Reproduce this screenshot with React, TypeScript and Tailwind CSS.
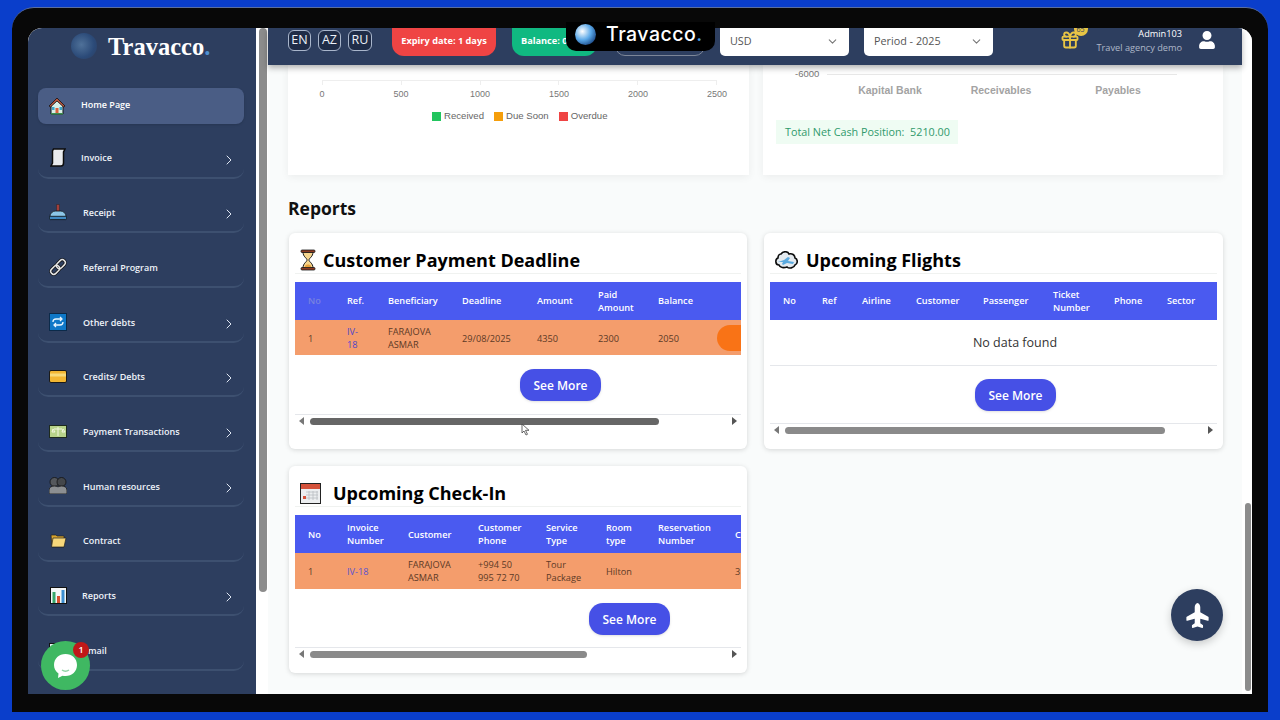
import { ChevronDown, ChevronRight, Gift } from "lucide-react";
import { FaPlane, FaUser } from "react-icons/fa";

const uiFont = "font-['Open_Sans','Noto_Sans',sans-serif]";

function HomeIcon() {
  return (
    <svg width="18" height="18" viewBox="0 0 18 18">
      <path d="M3 8v9h12V8L9 2z" fill="#d8efe9" stroke="#111" strokeWidth="1" />
      <path d="M1 9 9 1l8 8-1.500 1L9 4l-6.500 6z" fill="#b5533c" stroke="#111" strokeWidth=".8" />
      <rect x="7.500" y="11" width="3" height="6" fill="#d9603b" />
      <rect x="4" y="10" width="2.500" height="3" fill="#3da5c9" />
      <rect x="11.500" y="10" width="2.500" height="3" fill="#3da5c9" />
      <rect x="3" y="16" width="12" height="1.500" fill="#3f8f4f" />
    </svg>
  );
}

function ScrollIcon() {
  return (
    <svg width="16" height="19" viewBox="0 0 16 19">
      <path d="M3.500 1H15l-1.500 3v11c0 2-1 3-2.500 3H1l1.500-3V3z" fill="#e9ebee" stroke="#0c0c0c" strokeWidth="1.500" />
    </svg>
  );
}

function StampIcon() {
  return (
    <svg width="19" height="17" viewBox="0 0 19 17">
      <path d="M8 0h3v7H8z" fill="#a8403c" stroke="#222" strokeWidth=".5" />
      <path d="M1 13c0-4 3-6 6-6h5c3 0 6 2 6 6z" fill="#8cc7e8" stroke="#111" strokeWidth=".8" />
      <rect x=".5" y="12.500" width="18" height="3.500" rx="1" fill="#3f88c0" stroke="#111" strokeWidth=".8" />
    </svg>
  );
}

function LinkIcon() {
  return (
    <svg width="18" height="18" viewBox="0 0 18 18" fill="none">
      <g transform="rotate(-45 9 9)">
        <rect x="0" y="6" width="10" height="6" rx="3" stroke="#111" strokeWidth="3" />
        <rect x="8" y="6" width="10" height="6" rx="3" stroke="#111" strokeWidth="3" />
        <rect x="0" y="6" width="10" height="6" rx="3" stroke="#e6e6e6" strokeWidth="1.500" />
        <rect x="8" y="6" width="10" height="6" rx="3" stroke="#e6e6e6" strokeWidth="1.500" />
      </g>
    </svg>
  );
}

function RepeatIcon() {
  return (
    <svg width="18" height="18" viewBox="0 0 18 18" fill="none">
      <rect x=".5" y=".5" width="17" height="17" fill="#0f78c8" stroke="#0b2a4a" />
      <path d="M4 9c0-2 1-3 3-3h6M11 4l2 2-2 2M14 9c0 2-1 3-3 3H5M7 10l-2 2 2 2" stroke="#e9f6ff" strokeWidth="1.300" />
    </svg>
  );
}

function CardIcon() {
  return (
    <svg width="18" height="13" viewBox="0 0 18 13">
      <rect x=".5" y=".5" width="17" height="12" rx="1.500" fill="#f2b632" stroke="#1a1a1a" />
      <rect x="1" y="3.500" width="16" height="3" fill="#f7da7a" />
    </svg>
  );
}

function BanknoteIcon() {
  return (
    <svg width="18" height="13" viewBox="0 0 18 13">
      <rect x=".5" y=".5" width="17" height="12" fill="#b7d38a" stroke="#1d2a1d" />
      <path d="M9 2v9M5 4h8M4 4l-1 3h3zM14 4l-1 3h3z" stroke="#f1f6de" strokeWidth="1" fill="none" />
    </svg>
  );
}

function PeopleIcon() {
  return (
    <svg width="18" height="17" viewBox="0 0 18 17">
      <circle cx="5.500" cy="5" r="4.500" fill="#55585c" stroke="#111" strokeWidth=".8" />
      <circle cx="12.500" cy="5" r="4.500" fill="#44474b" stroke="#111" strokeWidth=".8" />
      <path d="M0 17v-4c0-3 3-4 5.500-4s3.500 1 3.500 1 1-1 3.500-1 5.500 1 5.500 4v4z" fill="#8c8f92" stroke="#111" strokeWidth=".8" />
    </svg>
  );
}

function FolderIcon() {
  return (
    <svg width="17" height="14" viewBox="0 0 17 14">
      <path d="M1 1h5l1 1h7v11H2z" fill="#d9a52e" stroke="#222" strokeWidth=".7" />
      <path d="M3 4h13l-2 9H1.500z" fill="#f7d77a" stroke="#222" strokeWidth=".7" />
    </svg>
  );
}

function ChartIcon() {
  return (
    <svg width="17" height="17" viewBox="0 0 17 17">
      <rect x=".5" y=".5" width="16" height="16" fill="#f4f6f6" stroke="#111" />
      <rect x="2.500" y="5" width="3" height="11" fill="#37a66b" />
      <rect x="7" y="9" width="3" height="7" fill="#d8502f" />
      <rect x="11.500" y="3" width="3" height="13" fill="#3d8fd1" />
    </svg>
  );
}

function MailIcon() {
  return (
    <svg width="18" height="14" viewBox="0 0 18 14">
      <rect x=".5" y=".5" width="17" height="13" fill="#e9eef2" stroke="#111" />
    </svg>
  );
}

function HourglassIcon() {
  return (
    <svg width="16" height="22" viewBox="0 0 16 22">
      <path d="M3 3c0 5 4 6 4 8s-4 3-4 8h10c0-5-4-6-4-8s4-3 4-8z" fill="#f6d58d" stroke="#1a1a1a" strokeWidth="1" />
      <path d="M5 17c1-2 5-2 6 0v2H5z" fill="#e9a23b" />
      <rect x="1" y="1" width="14" height="2.500" rx="1" fill="#8d3b22" stroke="#1a1a1a" strokeWidth=".8" />
      <rect x="1" y="18.500" width="14" height="2.500" rx="1" fill="#8d3b22" stroke="#1a1a1a" strokeWidth=".8" />
    </svg>
  );
}

function CloudPlaneIcon() {
  return (
    <svg width="23" height="19" viewBox="0 0 23 19">
      <path d="M6 3c2-3 7-3 8 0 3-1 6 1 6 4 3 1 3 6 0 7-1 3-6 4-8 2-3 1-7 1-8-2-4 0-4-6-1-7 0-2 1-4 3-4z" fill="#e4eaef" stroke="#0c0c0c" strokeWidth="1.600" />
      <path d="M3 11l6-2 4-3 2 1-2 3 6 1-1 2-6-1-4 2-1-1 1-2z" fill="#5aa9de" />
    </svg>
  );
}

function CalendarIcon() {
  return (
    <svg width="21" height="21" viewBox="0 0 21 21">
      <rect x=".5" y=".5" width="20" height="20" fill="#eceef0" stroke="#222" />
      <rect x="1" y="1" width="19" height="5" fill="#d5523b" />
      <path d="M6 9h12M6 12h12M6 15h12M9 8v9M13 8v9M17 8v9" stroke="#b9bdc2" strokeWidth=".8" />
      <rect x="3" y="13" width="3" height="3" fill="#d5523b" />
    </svg>
  );
}

const navItems = [
  { label: "Invoice", icon: <ScrollIcon />, arrow: true, ml: "ml-[14px]" },
  { label: "Receipt", icon: <StampIcon />, arrow: true, ml: "ml-[16px]" },
  { label: "Referral Program", icon: <LinkIcon />, arrow: false, ml: "ml-[16px]" },
  { label: "Other debts", icon: <RepeatIcon />, arrow: true, ml: "ml-[16px]" },
  { label: "Credits/ Debts", icon: <CardIcon />, arrow: true, ml: "ml-[16px]" },
  { label: "Payment Transactions", icon: <BanknoteIcon />, arrow: true, ml: "ml-[16px]" },
  { label: "Human resources", icon: <PeopleIcon />, arrow: true, ml: "ml-[16px]" },
  { label: "Contract", icon: <FolderIcon />, arrow: false, ml: "ml-[16px]" },
  { label: "Reports", icon: <ChartIcon />, arrow: true, ml: "ml-[15px]" },
  { label: "Email", icon: <MailIcon />, arrow: false, ml: "ml-[16px]" },
];

function Sidebar() {
  return (
    <aside className="w-[228px] shrink-0 bg-[#2d3e5f] rounded-tl-[14px] overflow-hidden">
      <div className="h-[60px] flex items-start pt-[5px] pl-[43px]">
        <div className="w-[26px] h-[26px] rounded-full bg-[radial-gradient(circle_at_40%_45%,#4f7199,#2b4a78_60%,#2d3e5f)]" />
        <div className="ml-[11px] font-['Liberation_Serif',serif] font-bold text-[24.500px] leading-[28px] text-white">
          Travacco<span className="text-[#4f8fd0]">.</span>
        </div>
      </div>
      <nav className="pl-[10px] w-[216px] flex flex-col gap-[14.700px]">
        <div className="h-[36px] flex items-center pl-[10px] bg-[#4a5d85] rounded-[8px] shadow-sm">
          <div className="w-[18px] flex justify-center"><HomeIcon /></div>
          <span className="ml-[15px] mb-[3px] text-[9px] font-semibold text-white">Home Page</span>
        </div>
        {navItems.map((item) => (
          <div
            key={item.label}
            className="h-[40px] flex items-center pl-[11px] pr-[7px] border-b-2 border-[#3d5070] rounded-[10px]"
          >
            <div className="w-[18px] flex justify-center">{item.icon}</div>
            <span className={`${item.ml} mt-[1px] text-[9px] font-semibold text-[#eef2f8]`}>{item.label}</span>
            {item.arrow && <ChevronRight size={16} strokeWidth={1.5} className="ml-auto mt-[4px] text-[#dfe6f2]" />}
          </div>
        ))}
      </nav>
    </aside>
  );
}

function LangButton({ code, w }: { code: string; w: string }) {
  return (
    <div className={`${w} h-[21px] flex items-center justify-center border border-[#a9b6cc] rounded-[6px] bg-[#1f2c47] text-[12.500px] text-[#eef2f8]`}>
      {code}
    </div>
  );
}

function SelectBox({ label, ml }: { label: string; ml: string }) {
  return (
    <div className={`${ml} w-[129px] h-[28px] pb-[2px] bg-white rounded-b-[5px] flex items-center pl-[10px] pr-[10px] text-[10.800px] text-[#555]`}>
      {label}
      <ChevronDown size={13} className="ml-auto text-[#777]" />
    </div>
  );
}

function TopBar() {
  return (
    <header className="relative z-10 h-[37px] shrink-0 flex items-start pl-[20px] pr-[26px] bg-[#2d3e5f] shadow-[0_3px_6px_rgba(0,0,0,0.3)]">
      <div className="flex gap-[7px] mt-[2px]">
        <LangButton code="EN" w="w-[23px]" />
        <LangButton code="AZ" w="w-[23px]" />
        <LangButton code="RU" w="w-[24px]" />
      </div>
      <div className="ml-[20px] w-[104px] h-[28px] pb-[3px] rounded-b-[12px] bg-[#ef4444] flex items-center justify-center text-[9.200px] font-bold text-white">
        Expiry date: 1 days
      </div>
      <div className="ml-[16px] w-[85px] h-[28px] pb-[3px] rounded-b-[12px] bg-[#10b981] flex items-center pl-[9px] text-[9.200px] font-bold text-white">
        Balance: 0
      </div>
      <div className="ml-[18px] w-[90px] h-[28px] rounded-b-[10px] border border-[#7d8698]" />
      <SelectBox label="USD" ml="ml-[15px]" />
      <SelectBox label="Period - 2025" ml="ml-[15px]" />
      <div className="relative ml-auto mt-[2px]">
        <Gift size={20} strokeWidth={2.25} className="text-[#e8c545]" />
        <div className="absolute -top-[4px] left-[14px] w-[14px] h-[10px] rounded-b-full bg-[#e8c545] text-[7px] leading-[8px] text-center text-[#2d3e5f]">
          65
        </div>
      </div>
      <div className="ml-[17px] -mt-[1px] text-right text-[9.200px] leading-[14px]">
        <div className="text-white">Admin103</div>
        <div className="text-[#aeb7c8]">Travel agency demo</div>
      </div>
      <FaUser size={18} className="ml-[16px] mt-[3px] text-white" />
    </header>
  );
}

function ScrollTrack({ thumb, color }: { thumb: string; color: string }) {
  return (
    <div className="h-[13px] border-t border-[#e5e7eb] flex items-center">
      <div className="w-0 h-0 ml-[4px] border-y-[4px] border-y-transparent border-r-[5px] border-r-[#777]" />
      <div className={`${thumb} ${color} ml-[6px] h-[7px] rounded-full`} />
      <div className="w-0 h-0 ml-auto mr-[4px] border-y-[4px] border-y-transparent border-l-[5px] border-l-[#555]" />
    </div>
  );
}

function SeeMore({ ml }: { ml: string }) {
  return (
    <button className={`${ml} block w-[81px] h-[32px] pt-[1px] rounded-[14px] bg-[#4650e6] text-[12px] font-semibold text-white shadow-sm`}>
      See More
    </button>
  );
}

function ReportCard({
  icon,
  title,
  titleMl,
  children,
}: {
  icon: React.ReactNode;
  title: string;
  titleMl: string;
  children: React.ReactNode;
}) {
  return (
    <section className="bg-white rounded-[6px] shadow-[0_1px_5px_rgba(0,0,0,0.15)] px-[6px]">
      <div className="h-[41px] pt-[14px] pl-[5px] flex items-center border-b border-[#f0f2f0]">
        {icon}
        <h3 className={`${titleMl} text-[18px] font-bold text-black`}>{title}</h3>
      </div>
      {children}
    </section>
  );
}

function TopCharts() {
  return (
    <div className="h-[110px] shrink-0 grid grid-cols-[461px_460px] gap-[14px] font-['Liberation_Sans',sans-serif]">
      <div className="bg-white shadow-[0_2px_8px_rgba(0,0,0,0.06)] pt-[15px]">
        <div className="ml-[34px] w-[395px] border-t border-[#eee] flex justify-between">
          {[0, 1, 2, 3, 4, 5].map((t) => (
            <div key={t} className="w-px h-[4px] bg-[#eee]" />
          ))}
        </div>
        <div className="-ml-[5.500px] mt-[3px] grid grid-cols-[repeat(6,79px)] text-center text-[9px] leading-[12px] text-[#777]">
          {["0", "500", "1000", "1500", "2000", "2500"].map((t) => (
            <span key={t}>{t}</span>
          ))}
        </div>
        <div className="ml-[144px] mt-[10px] flex items-center text-[9.600px] leading-[12px] text-[#666]">
          <span className="w-[9px] h-[9px] bg-[#22c55e]" />
          <span className="ml-[3px]">Received</span>
          <span className="ml-[10px] w-[9px] h-[9px] bg-[#f59e0b]" />
          <span className="ml-[3px]">Due Soon</span>
          <span className="ml-[10px] w-[9px] h-[9px] bg-[#ef4444]" />
          <span className="ml-[3px]">Overdue</span>
        </div>
      </div>
      <div className="bg-white shadow-[0_2px_8px_rgba(0,0,0,0.06)] pt-[3px]">
        <div className="flex items-center text-[9.500px] leading-[12px] text-[#777]">
          <span className="ml-[32px] w-[32px]">-6000</span>
          <div className="w-[350px] h-px bg-[#e8e8e8]" />
        </div>
        <div className="ml-[71.500px] mt-[4px] grid grid-cols-[111px_111px_123px] text-center text-[10.500px] font-bold leading-[12px] text-[#a3a3a3]">
          <span>Kapital Bank</span>
          <span>Receivables</span>
          <span>Payables</span>
        </div>
        <div className={`${uiFont} ml-[13px] mt-[24px] w-[182px] h-[24px] flex items-center pl-[9px] whitespace-nowrap bg-[#effcf3] text-[10.800px] text-[#2f9a6c]`}>
          Total Net Cash Position:&nbsp; 5210.00
        </div>
      </div>
    </div>
  );
}

function PaymentTable() {
  const head = ["No", "Ref.", "Beneficiary", "Deadline", "Amount", "Paid Amount", "Balance", ""];
  return (
    <div className="mt-[8px] overflow-hidden text-[9.200px] leading-[13px]">
      <div className="w-[500px] h-[38px] pb-[1px] pl-[13px] grid grid-cols-[39px_41px_74px_75px_61px_60px_59px_60px] items-center bg-[#4a5af0] font-semibold text-white">
        {head.map((h, i) => (
          <span key={h} className={i === 0 ? "w-min text-[#7882df]" : "w-min"}>{h}</span>
        ))}
      </div>
      <div className="w-[500px] h-[35px] pt-[1px] pl-[13px] grid grid-cols-[39px_41px_74px_75px_61px_60px_59px_60px] items-center bg-[#f49d6c] text-[#5c3a26]">
        <span>1</span>
        <span className="w-[20px] text-[#4f46c8] font-medium">IV-18</span>
        <span className="w-[60px]">FARAJOVA ASMAR</span>
        <span>29/08/2025</span>
        <span>4350</span>
        <span>2300</span>
        <span>2050</span>
        <div className="w-[60px] h-[26px] rounded-full bg-[#f97316]" />
      </div>
    </div>
  );
}

function FlightsTable() {
  const head = ["No", "Ref", "Airline", "Customer", "Passenger", "Ticket Number", "Phone", "Sector"];
  return (
    <div className="mt-[8px] overflow-hidden">
      <div className="w-[490px] h-[38px] pb-[1px] pl-[13px] grid grid-cols-[39px_40px_54px_67px_70px_61px_53px_60px] items-center bg-[#4a5af0] text-[9.200px] leading-[13px] font-semibold text-white">
        {head.map((h) => (
          <span key={h} className="w-min">{h}</span>
        ))}
      </div>
      <div className="w-[490px] h-[46px] pt-[2px] flex items-center justify-center border-b border-[#e5e7eb] text-[12.500px] text-[#333]">
        No data found
      </div>
    </div>
  );
}

function CheckInTable() {
  const head = ["No", "Invoice Number", "Customer", "Customer Phone", "Service Type", "Room type", "Reservation Number", "Check"];
  return (
    <div className="mt-[8px] overflow-hidden text-[9.200px] leading-[13px]">
      <div className="w-[520px] h-[38px] pl-[13px] grid grid-cols-[39px_61px_70px_68px_60px_52px_77px_60px] items-center bg-[#4a5af0] font-semibold text-white">
        {head.map((h) => (
          <span key={h} className="w-min">{h}</span>
        ))}
      </div>
      <div className="w-[520px] h-[36px] pl-[13px] grid grid-cols-[39px_61px_70px_68px_60px_52px_77px_60px] items-center bg-[#f49d6c] text-[#5c3a26]">
        <span>1</span>
        <span className="text-[#5b54d0] font-medium">IV-18</span>
        <span className="w-[60px]">FARAJOVA ASMAR</span>
        <span className="w-[50px]">+994 50 995 72 70</span>
        <span className="w-[40px]">Tour Package</span>
        <span>Hilton</span>
        <span />
        <span>3</span>
      </div>
    </div>
  );
}

export default function App() {
  return (
    <div className={`${uiFont} w-[1280px] h-[720px] overflow-hidden bg-[#0a3ecb] pt-[7px] px-[12px] pb-[8px]`}>
      <div className="relative h-full bg-[#080808] rounded-t-[22px] border-t border-[#5b6f9e] pt-[20px] px-[16px] pb-[18px]">
        <div className="h-full flex bg-white rounded-t-[14px] overflow-hidden">
          <Sidebar />

          {/* sidebar scrollbar strip */}
          <div className="w-[12px] shrink-0 pl-[3px] pr-[1px]">
            <div className="h-[564px] rounded-full bg-[#8c8c8c]" />
          </div>

          <main className="w-[974px] shrink-0 flex flex-col bg-[#f9fbfb]">
            <TopBar />
            <div className="pl-[20px] flex-1 overflow-hidden">
              <TopCharts />
              <h2 className="mt-[21px] mb-[13px] text-[17.500px] leading-[24px] font-bold text-[#111]">Reports</h2>
              <div className="ml-[1px] grid grid-cols-[458px_459px] gap-x-[17px] gap-y-[17px]">
                <ReportCard icon={<HourglassIcon />} title="Customer Payment Deadline" titleMl="ml-[7px]">
                  <PaymentTable />
                  <div className="h-[14px]" />
                  <SeeMore ml="ml-[225px]" />
                  <div className="mt-[13px] pb-[22px]">
                    <ScrollTrack thumb="w-[349px]" color="bg-[#666]" />
                  </div>
                </ReportCard>
                <ReportCard icon={<CloudPlaneIcon />} title="Upcoming Flights" titleMl="ml-[8px]">
                  <FlightsTable />
                  <div className="h-[13px]" />
                  <SeeMore ml="ml-[205px]" />
                  <div className="mt-[12px] pb-[13px]">
                    <ScrollTrack thumb="w-[380px]" color="bg-[#8a8a8a]" />
                  </div>
                </ReportCard>
                <ReportCard icon={<CalendarIcon />} title="Upcoming Check-In" titleMl="ml-[12px]">
                  <CheckInTable />
                  <div className="h-[14px]" />
                  <SeeMore ml="ml-[294px]" />
                  <div className="mt-[12px] pb-[13px]">
                    <ScrollTrack thumb="w-[277px]" color="bg-[#8a8a8a]" />
                  </div>
                </ReportCard>
              </div>
            </div>
          </main>

          {/* page scrollbar strip */}
          <div className="flex-1 flex flex-col justify-end pl-[3px] pr-[1px] pb-[3px] bg-white">
            <div className="h-[188px] rounded-full bg-[#8c8c8c]" />
          </div>
        </div>

        {/* video watermark */}
        <div className="absolute z-20 left-[554px] top-[14px] w-[149px] h-[29px] pb-[4px] bg-black rounded-b-[10px] flex items-center pl-[9px]">
          <div className="w-[21px] h-[21px] rounded-full bg-[radial-gradient(circle_at_35%_35%,#ffffff,#5aa8e8_45%,#123a78_85%)]" />
          <span className="ml-[10px] font-['Inter',sans-serif] font-medium text-[19.500px] tracking-[0.5px] text-white">
            Travacco<span className="text-[#4f9fe0]">.</span>
          </span>
        </div>

        {/* chat bubble */}
        <div className="absolute z-20 left-[29px] top-[633px] w-[49px] h-[49px] rounded-full bg-[#3fb862] flex items-center justify-center">
          <svg width="25" height="26" viewBox="0 0 25 26">
            <path d="M12.500 1C19 1 24 5.500 24 12s-5 11-11.500 11c-1 0-2 0-3-.300L5 25l.5-4.500C2.500 18.500 1 15.500 1 12 1 5.500 6 1 12.500 1z" fill="#fff" />
            <path d="M9 17c2 1.500 5 1.500 7 0" stroke="#8fd3a4" strokeWidth="1.500" fill="none" />
          </svg>
          <div className="absolute left-[32px] top-[1px] w-[16px] h-[16px] rounded-full bg-[#c01818] flex items-center justify-center text-[9px] font-semibold text-white">
            1
          </div>
        </div>

        {/* plane button */}
        <div className="absolute z-20 left-[1159px] top-[581px] w-[52px] h-[52px] rounded-full bg-[#2d3e5f] shadow-[0_3px_8px_rgba(0,0,0,0.2)] flex items-center justify-center">
          <FaPlane size={25} className="-rotate-90 text-white" />
        </div>

        {/* mouse pointer */}
        <svg className="absolute z-20 left-[509px] top-[415px]" width="9" height="13" viewBox="0 0 9 13">
          <path d="M1 1v9l2-2 2 4 1.500-.7-2-4H8z" fill="#fff" stroke="#444" strokeWidth=".8" />
        </svg>
      </div>
    </div>
  );
}
